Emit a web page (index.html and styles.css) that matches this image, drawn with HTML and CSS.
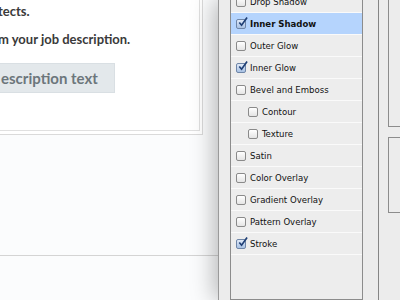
FILE: index.html
```html
<!DOCTYPE html>
<html lang="en">
<head>
    <meta charset="UTF-8">
    <meta name="viewport" content="width=device-width, initial-scale=1.0">
    <title>Layer Style</title>
    <link rel="stylesheet" href="styles.css">
</head>
<body>
    <div class="page">
        <main class="site">
            <div class="card">
                <div class="card-inner">
                    <p class="lead">tects.</p>
                    <p class="lead">m your job description.</p>
                    <button class="paste">escription text</button>
                </div>
            </div>
            <div class="divider"></div>
        </main>
        <aside class="dialog">
            <ul class="styles">
                <li><span class="box"></span>Drop Shadow</li>
                <li class="selected"><span class="box checked"><svg viewBox="0 0 12 12"><path d="M2.5 6 L5 9 L11 0.5" /></svg></span>Inner Shadow</li>
                <li><span class="box"></span>Outer Glow</li>
                <li><span class="box checked"><svg viewBox="0 0 12 12"><path d="M2.5 6 L5 9 L11 0.5" /></svg></span>Inner Glow</li>
                <li><span class="box"></span>Bevel and Emboss</li>
                <li class="sub"><span class="box"></span>Contour</li>
                <li class="sub"><span class="box"></span>Texture</li>
                <li><span class="box"></span>Satin</li>
                <li><span class="box"></span>Color Overlay</li>
                <li><span class="box"></span>Gradient Overlay</li>
                <li><span class="box"></span>Pattern Overlay</li>
                <li><span class="box checked"><svg viewBox="0 0 12 12"><path d="M2.5 6 L5 9 L11 0.5" /></svg></span>Stroke</li>
            </ul>
            <div class="col-line"></div>
            <div class="options">
                <div class="group first"></div>
                <div class="group second"></div>
            </div>
        </aside>
    </div>
</body>
</html>
```

FILE: styles.css
```css
body {
    margin: 0;
    overflow: hidden;
}
.page {
    display: flex;
    width: 400px;
    height: 300px;
    overflow: hidden;
}
.site {
    width: 218px;
    flex: none;
    background-color: #fbfcfd;
    overflow: hidden;
}
.card {
    margin: -20px 0 0 -20px;
    width: 223px;
    box-sizing: border-box;
    border: 1px solid #dadada;
    padding: 0 2px 3px 0;
    background-color: #fff;
}
.card-inner {
    height: 150px;
    box-sizing: border-box;
    border: 1px solid #e0e0e0;
    padding: 20px 0 0 16px;
}
.lead {
    margin: 0 0 10px 0;
    font-family: 'Lato', sans-serif;
    font-weight: 700;
    font-size: 13px;
    line-height: 18px;
    color: #3a3a3a;
}
.lead + .lead {
    margin-bottom: 15px;
}
.paste {
    display: block;
    width: 117px;
    height: 30px;
    margin: 0;
    padding: 0 0 0 2px;
    border: 1px solid #d9dfe3;
    background-color: #e3e8eb;
    font-family: 'Lato', sans-serif;
    font-weight: 700;
    font-size: 15px;
    color: #6c767b;
    text-align: left;
}
.divider {
    margin-top: 120px;
    border-top: 1px solid #d4d4d4;
}
.dialog {
    flex: 1;
    position: relative;
    z-index: 1;
    display: flex;
    padding-left: 11px;
    background-color: #ececec;
    border-left: 1px solid #9a9a9a;
    box-shadow: -4px 0 22px rgba(0, 0, 0, 0.28);
}
.styles {
    list-style: none;
    margin: -10px 0 0 0;
    padding: 0;
    width: 133px;
    flex: none;
    box-sizing: border-box;
    border: 1px solid #8c8c8c;
    background-color: #ededed;
    font-family: 'DejaVu Sans Condensed', 'DejaVu Sans', sans-serif;
    font-size: 9.5px;
    color: #111;
}
.styles li {
    display: flex;
    align-items: center;
    height: 21px;
    padding-left: 5px;
    border-bottom: 1px solid #fafafa;
}
.styles li.sub {
    padding-left: 17px;
}
.styles li.selected {
    background-color: #b5d4fd;
    font-weight: bold;
}
.box {
    position: relative;
    width: 10px;
    height: 10px;
    box-sizing: border-box;
    margin-right: 4px;
    border: 1px solid #8a8a8a;
    border-radius: 2px;
    background: linear-gradient(#ffffff, #e4e4e4);
}
.box.checked {
    border-color: #6f86a8;
    background: linear-gradient(#dfe9f7, #a9c2e4);
}
.box svg {
    position: absolute;
    left: 0;
    top: -3px;
    width: 11px;
    height: 11px;
    fill: none;
    stroke: #1f3f75;
    stroke-width: 1.8;
}
.col-line {
    width: 1px;
    margin-left: 15px;
    flex: none;
    background-color: #858585;
}
.options {
    flex: 1;
    padding-left: 9px;
}
.group {
    border: 1px solid #8c8c8c;
    border-right: none;
}
.group.first {
    margin-top: -5px;
    height: 130px;
}
.group.second {
    margin-top: 10px;
    height: 74px;
}
```
